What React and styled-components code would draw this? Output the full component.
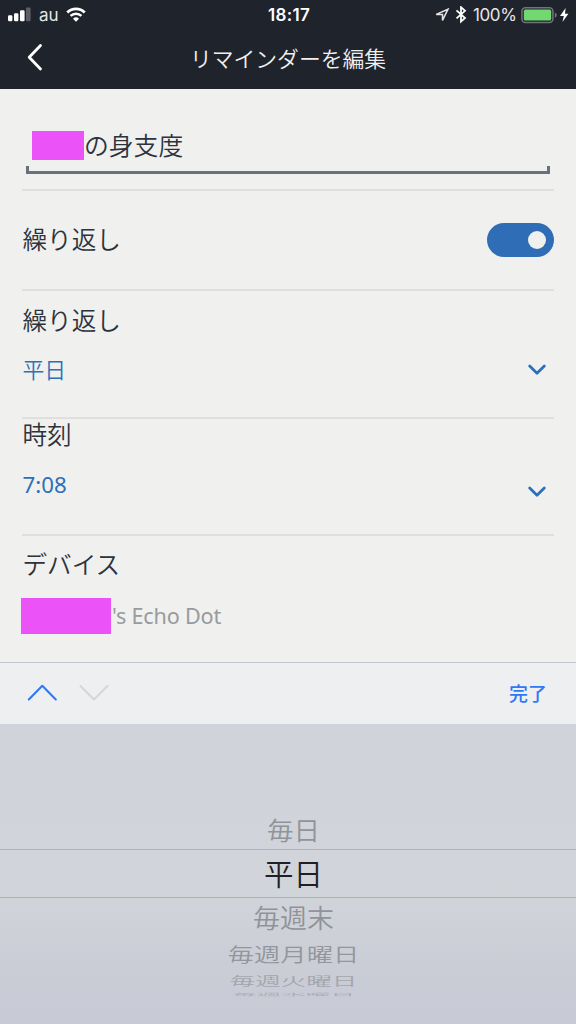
import React from "react";
import styled, { createGlobalStyle } from "styled-components";

const GlobalStyle = createGlobalStyle`
  * {
    box-sizing: border-box;
  }

  body {
    margin: 0;
    background: #f0f0ef;
    font-family: "Noto Sans", "Noto Sans CJK JP", sans-serif;
  }
`;

const wheelItems = [
  { label: "毎日", height: 37, size: 26.5, scale: 0.95, color: "#909398", shift: -1 },
  { label: "平日", height: 49, size: 29.5, scale: 1, color: "#1f2023", selected: true, shift: 0 },
  { label: "毎週末", height: 40, size: 27, scale: 0.97, color: "#909398", shift: 0 },
  { label: "毎週月曜日", height: 33, size: 26.3, scale: 0.75, color: "#93969c", shift: -1 },
  { label: "毎週火曜日", height: 21, size: 25.5, scale: 0.48, color: "#a3a6ad", shift: -1 },
  { label: "毎週水曜日", height: 8, size: 24.6, scale: 0.16, color: "#a9acb4", shift: -1 },
];

const Chevron = ({ width, height, stroke, color, points }) => (
  <svg width={width} height={height} fill="none">
    <polyline
      points={points}
      stroke={color}
      strokeWidth={stroke}
      strokeLinecap="round"
      strokeLinejoin="round"
    />
  </svg>
);

const DropdownArrow = () => (
  <Chevron width={20} height={14} stroke={2.8} color="#2d70b9" points="2.7,3 10,10.2 17.3,3" />
);

const StatusBar = () => (
  <Status>
    <StatusSide>
      <svg width="24" height="16" fill="#fff">
        <rect x="0" y="8.2" width="4.4" height="6" rx="1.2" />
        <rect x="6" y="6.2" width="4.4" height="8" rx="1.2" />
        <rect x="12" y="3.2" width="4.6" height="11" rx="1.2" />
        <rect x="18" y="0.6" width="4.6" height="13.6" rx="1.2" fill="#5c5f66" />
      </svg>
      <Carrier>au</Carrier>
      <svg width="20" height="16" viewBox="0 0 20 16" fill="none" stroke="#fff">
        <path d="M1.3 5.4a12.4 12.4 0 0 1 17.4 0" strokeWidth="2.8" />
        <path d="M4.6 8.9a7.7 7.7 0 0 1 10.8 0" strokeWidth="2.5" />
        <path d="M10 14.7 7 11.7a4.3 4.3 0 0 1 6 0Z" fill="#fff" stroke="none" />
      </svg>
    </StatusSide>
    <Clock>18:17</Clock>
    <StatusSide $end>
      <svg width="16" height="15" fill="none" stroke="#e4e4e5" strokeWidth="1.5">
        <path d="M2.2 6.4 14 1.2 8.5 12.4V6.4Z" strokeLinejoin="miter" />
      </svg>
      <Bluetooth width="12" height="18" fill="none" stroke="#fff" strokeWidth="1.8">
        <path d="M1.5 4.4 10 12 6 15.6V1.2L10 4.8 1.5 12.4" />
      </Bluetooth>
      <Percent>100%</Percent>
      <svg width="38" height="17" fill="none">
        <rect x="0.9" y="0.8" width="31" height="14.6" rx="3.5" stroke="#71747a" strokeWidth="1.5" />
        <rect x="2.8" y="2.6" width="27.4" height="11" rx="1.7" fill="#72d970" />
        <path d="M33.8 5.6c2.6.8 2.6 4.4 0 5.2Z" fill="#71747a" />
      </svg>
      <svg width="9" height="15" fill="#fff">
        <path d="M5.6 0 0 7.9H3.8L2.5 13.9 8.4 5.8H5Z" />
      </svg>
    </StatusSide>
  </Status>
);

const App = () => {
  return (
    <>
      <GlobalStyle />
      <Screen>
        <Header>
          <StatusBar />
          <NavBar>
            <BackButton aria-label="戻る">
              <Chevron width={20} height={30} stroke={2.8} color="#fff" points="15.5,3.5 4.2,15.2 15.5,27" />
            </BackButton>
            <NavTitle>リマインダーを編集</NavTitle>
          </NavBar>
        </Header>

        <Form>
          <Section $height={102}>
            <NameField>
              <Redacted $width={52} $height={29} />
              <NameText>の身支度</NameText>
            </NameField>
            <FieldLine />
          </Section>
          <Section $height={100}>
            <ToggleRow>
              <Label>繰り返し</Label>
              <Toggle role="switch" aria-checked="true">
                <Knob />
              </Toggle>
            </ToggleRow>
          </Section>
          <Section $height={128} $top={12}>
            <Label>繰り返し</Label>
            <ValueRow $gap={14}>
              <Value>平日</Value>
              <DropdownArrow />
            </ValueRow>
          </Section>
          <Section $height={117} $top={-2}>
            <Label>時刻</Label>
            <ValueRow $gap={15} $arrowDrop={7}>
              <Value $medium>7:08</Value>
              <DropdownArrow />
            </ValueRow>
          </Section>
          <Section $height={126} $top={11} $last>
            <Label>デバイス</Label>
            <DeviceRow>
              <Redacted $width={90} $height={36} />
              <DeviceName>'s Echo Dot</DeviceName>
            </DeviceRow>
          </Section>
        </Form>

        <Accessory>
          <Arrows>
            <Chevron width={32} height={20} stroke={2.1} color="#2f78f6" points="2.8,16.4 16.3,2.8 29.8,16.4" />
            <Chevron width={32} height={20} stroke={2.1} color="#d4d6d8" points="2.5,3 16,16.6 29.5,3" />
          </Arrows>
          <Done>完了</Done>
        </Accessory>

        <Picker>
          {wheelItems.map((item) => (
            <WheelRow key={item.label} $height={item.height} $selected={item.selected}>
              <WheelText
                $size={item.size}
                $scale={item.scale}
                $color={item.color}
                $shift={item.shift}
              >
                {item.label}
              </WheelText>
            </WheelRow>
          ))}
        </Picker>
      </Screen>
    </>
  );
};

const Screen = styled.div`
  display: flex;
  flex-direction: column;
  width: 576px;
  height: 1024px;
  overflow: hidden;
  background: #f0f0ef;
`;

const Header = styled.header`
  height: 89px;
  flex: none;
  background: #1f232c;
  color: #fff;
`;

const Status = styled.div`
  display: grid;
  grid-template-columns: 1fr auto 1fr;
  align-items: center;
  height: 29px;
  padding: 0 7px 0 8px;
  font-family: Inter, sans-serif;
`;

const StatusSide = styled.div`
  display: flex;
  align-items: center;
  height: 29px;
  justify-content: ${(props) => (props.$end ? "flex-end" : "flex-start")};

  svg {
    flex: none;
  }
`;

const Carrier = styled.span`
  width: 34px;
  padding: 1px 0 0 7px;
  font-size: 17px;
  line-height: 29px;
  color: #e6e6e8;
`;

const Clock = styled.span`
  padding: 1px 0 0 1px;
  font-size: 17px;
  font-weight: 600;
  line-height: 29px;
  letter-spacing: 0.3px;
`;

const Bluetooth = styled.svg`
  margin: 0 6px 0 5px;
`;

const Percent = styled.span`
  width: 49px;
  padding-top: 1px;
  font-size: 17px;
  line-height: 29px;
  letter-spacing: -0.4px;
  color: #e6e6e8;

  & + svg {
    margin: 0 1px 0 -1px;
  }
`;

const NavBar = styled.div`
  display: grid;
  grid-template-columns: 60px 1fr 60px;
  height: 60px;
`;

const BackButton = styled.button`
  display: flex;
  padding: 13px 0 0 25px;
  border: none;
  background: none;
`;

const NavTitle = styled.h1`
  margin: 0;
  font-size: 21.8px;
  font-weight: 350;
  line-height: 60px;
  text-align: center;
  color: #f0f0f0;
`;

const Form = styled.main`
  flex: none;
  padding: 0 22px;
`;

const Section = styled.section`
  height: ${(props) => props.$height}px;
  border-bottom: ${(props) => (props.$last ? "none" : "2px solid #dfdfde")};

  & > :first-child {
    margin-top: ${(props) => props.$top || 0}px;
  }

  &::before {
    content: "";
    display: table;
  }
`;

const NameField = styled.div`
  display: flex;
  align-items: center;
  height: 77px;
  padding: 36px 0 0 10px;
`;

const Redacted = styled.span`
  flex: none;
  width: ${(props) => props.$width}px;
  height: ${(props) => props.$height}px;
  background: #eb52f7;
`;

const NameText = styled.span`
  padding-bottom: 2px;
  font-size: 24.8px;
  font-weight: 350;
  line-height: 36px;
  color: #2c333d;
`;

const FieldLine = styled.div`
  height: 8px;
  margin: 0 4px;
  border: solid #68717c;
  border-width: 0 3px 3px;
`;

const ToggleRow = styled.div`
  display: flex;
  align-items: center;
  justify-content: space-between;
  height: 98px;
`;

const Label = styled.div`
  padding-left: 0.5px;
  font-size: 24.6px;
  font-weight: 350;
  line-height: 36px;
  color: #2c333d;
`;

const Toggle = styled.div`
  display: flex;
  align-items: center;
  justify-content: flex-end;
  width: 67px;
  height: 34px;
  padding-right: 8px;
  border-radius: 17px;
  background: #2f6eb7;
`;

const Knob = styled.span`
  width: 18px;
  height: 18px;
  border-radius: 50%;
  background: #f0f0ef;
`;

const ValueRow = styled.div`
  display: flex;
  align-items: center;
  justify-content: space-between;
  height: 34px;
  margin-top: ${(props) => props.$gap}px;
  padding-right: 7px;

  svg {
    margin-top: ${(props) => (props.$arrowDrop || 0) * 2}px;
  }
`;

const Value = styled.span`
  padding-left: 0.5px;
  font-size: ${(props) => (props.$medium ? 22.3 : 21.8)}px;
  font-weight: ${(props) => (props.$medium ? 400 : 350)};
  line-height: 34px;
  color: #2d70b9;
`;

const DeviceRow = styled.div`
  display: flex;
  align-items: center;
  height: 36px;
  margin: 15px 0 0 -1px;
`;

const DeviceName = styled.span`
  padding-left: 1px;
  font-size: 21.6px;
  line-height: 36px;
  letter-spacing: -0.2px;
  color: #989b9c;
`;

const Accessory = styled.div`
  display: flex;
  flex: none;
  align-items: center;
  justify-content: space-between;
  height: 62px;
  padding: 0 29px 2px 26px;
  border-top: 1px solid #c3c6cb;
  background: #eeeff1;
`;

const Arrows = styled.div`
  display: flex;
  gap: 20px;
`;

const Done = styled.button`
  padding: 0;
  border: none;
  background: none;
  font-family: "Noto Sans CJK JP", sans-serif;
  font-size: 19px;
  font-weight: 500;
  line-height: 30px;
  color: #2f78f6;
`;

const Picker = styled.div`
  flex: 1;
  padding-top: 88px;
  background: linear-gradient(#d0d3d9 0%, #d1d4d9 55%, #c9ccd5 85%, #c8cbd5 100%);
`;

const WheelRow = styled.div`
  display: flex;
  align-items: center;
  justify-content: center;
  height: ${(props) => props.$height}px;
  padding-left: 11px;
  border: solid #afb2b7;
  border-width: ${(props) => (props.$selected ? "1px 0" : "0")};
`;

const WheelText = styled.span`
  flex: none;
  font-size: ${(props) => props.$size}px;
  font-weight: 350;
  line-height: 40px;
  white-space: nowrap;
  color: ${(props) => props.$color};
  transform: translateY(${(props) => props.$shift}px) scaleY(${(props) => props.$scale});
`;

export default App;
